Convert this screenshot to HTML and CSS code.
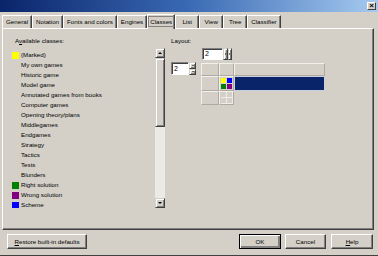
FILE: index.html
```html
<!DOCTYPE html>
<html>
<head>
<meta charset="utf-8">
<link rel="stylesheet" href="styles.css">
</head>
<body>
<div class="window">
  <div class="titlebar"><span class="close">×</span></div>
  <div class="tabs">
    <span class="tab">General</span>
    <span class="tab">Notation</span>
    <span class="tab">Fonts and colors</span>
    <span class="tab">Engines</span>
    <span class="tab active"><span class="focus">Classes</span></span>
    <span class="tab">List</span>
    <span class="tab">View</span>
    <span class="tab">Tree</span>
    <span class="tab">Classifier</span>
  </div>
  <div class="panel">
    <div class="left">
      <div class="label">A<u>v</u>ailable classes:</div>
      <div class="listbox">
        <ul class="items">
          <li><span class="sw sw-yellow"></span>(Marked)</li>
          <li><span class="sw"></span>My own games</li>
          <li><span class="sw"></span>Historic game</li>
          <li><span class="sw"></span>Model game</li>
          <li><span class="sw"></span>Annotated games from books</li>
          <li><span class="sw"></span>Computer games</li>
          <li><span class="sw"></span>Opening theory/plans</li>
          <li><span class="sw"></span>Middlegames</li>
          <li><span class="sw"></span>Endgames</li>
          <li><span class="sw"></span>Strategy</li>
          <li><span class="sw"></span>Tactics</li>
          <li><span class="sw"></span>Tests</li>
          <li><span class="sw"></span>Blunders</li>
          <li><span class="sw sw-green"></span>Right solution</li>
          <li><span class="sw sw-purple"></span>Wrong solution</li>
          <li><span class="sw sw-blue"></span>Scheme</li>
        </ul>
        <div class="scrollbar">
          <div class="sb-btn"><span class="arr-up"></span></div>
          <div class="sb-thumb"></div>
          <div class="sb-track"></div>
          <div class="sb-btn"><span class="arr-down"></span></div>
        </div>
      </div>
    </div>
    <div class="right">
      <div class="label">Layout:</div>
      <div class="spin spin-h">
        <span class="field field-h">2</span>
        <span class="hbtns"><span class="mini"><span class="arr-l"></span></span><span class="mini"><span class="arr-r"></span></span></span>
      </div>
      <div class="layout-row">
        <div class="spin spin-v">
          <span class="field field-v">2</span>
          <span class="vbtns"><span class="mini"><span class="arr-su"></span></span><span class="mini"><span class="arr-sd"></span></span></span>
        </div>
        <div class="grid">
          <div class="cell"></div>
          <div class="cell"></div>
          <div class="cell"></div>
          <div class="cell"></div>
          <div class="cell colors">
            <span class="dot sw-yellow"></span><span class="dot sw-blue"></span>
            <span class="dot sw-green"></span><span class="dot sw-purple"></span>
          </div>
          <div class="cell navy"></div>
          <div class="cell"></div>
          <div class="cell smalls"><span></span><span></span><span></span><span></span></div>
          <div class="blank"></div>
        </div>
      </div>
    </div>
  </div>
  <div class="footer">
    <span class="btn btn-restore"><u>R</u>estore built-in defaults</span>
    <span class="spacer"></span>
    <span class="btn btn-ok">OK</span>
    <span class="btn btn-cancel">Cancel</span>
    <span class="btn btn-help"><u>H</u>elp</span>
  </div>
</div>
</body>
</html>
```
FILE: styles.css
```css
* { box-sizing: border-box; }
body {
  margin: 0;
  background: #d4d0c8;
  font: 6.2px/8px "Liberation Sans", Arial, sans-serif;
  color: #000;
}
u { text-decoration: underline; text-underline-offset: 1px; }
.window {
  width: 378px;
  height: 256px;
  display: flex;
  flex-direction: column;
  overflow: hidden;
  border-bottom: 1px solid #404040;
}
.titlebar {
  height: 12px;
  flex: none;
  background: linear-gradient(to right, #0a246a 0%, #3a6ab4 50%, #a6caf0 100%);
  display: flex;
  justify-content: flex-end;
  padding: 2px 2px 0 0;
}
.close {
  width: 9px;
  height: 8px;
  background: #d4d0c8;
  border: 1px solid;
  border-color: #fff #404040 #404040 #fff;
  font-size: 8px;
  line-height: 6px;
  text-align: center;
  font-weight: bold;
}
.tabs {
  height: 16px;
  flex: none;
  display: flex;
  align-items: flex-end;
  padding-left: 2px;
}
.tab {
  height: 13px;
  line-height: 12px;
  padding: 0 3px;
  min-width: 24px;
  text-align: center;
  border-left: 1px solid #fff;
  border-top: 1px solid #fff;
  border-right: 1px solid #404040;
  box-shadow: inset -1px 0 #808080;
}
.tab.active {
  height: 15px;
  padding: 1px 0 0;
  margin-bottom: -1px;
  background: #d4d0c8;
  position: relative;
  z-index: 1;
}
.focus {
  display: block;
  border: 1px solid #858380;
  line-height: 9px;
  padding: 0 1px;
}
.panel {
  flex: none;
  height: 202px;
  margin: 0 4px 0 2px;
  border-top: 1px solid #fff;
  border-left: 1px solid #fff;
  border-right: 1px solid #404040;
  border-bottom: 1px solid #404040;
  box-shadow: inset -1px -1px #808080;
  display: flex;
  gap: 6px;
  padding: 8px 0 0 7px;
}
.left { width: 155px; display: flex; flex-direction: column; }
.label { height: 8px; line-height: 8px; padding-left: 5px; }
.right .label { padding-left: 0; }
.listbox {
  margin-top: 3px;
  height: 160px;
  display: flex;
}
.items {
  flex: 1;
  list-style: none;
  margin: 0;
  padding: 2px 0 0 2px;
  overflow: hidden;
}
.items li {
  height: 10px;
  line-height: 10px;
  display: flex;
  align-items: center;
  white-space: nowrap;
}
.sw {
  width: 7px;
  height: 7px;
  margin-right: 2px;
  flex: none;
}
.sw-yellow { background: #ffff00; }
.sw-green { background: #008000; }
.sw-purple { background: #800080; }
.sw-blue { background: #0000ff; }
.scrollbar {
  width: 10px;
  display: flex;
  flex-direction: column;
  background: #eceae5;
}
.sb-btn, .sb-thumb, .mini {
  background: #d4d0c8;
  border: 1px solid;
  border-color: #d4d0c8 #404040 #404040 #d4d0c8;
  box-shadow: inset 1px 1px #fff, inset -1px -1px #808080;
}
.sb-btn {
  height: 10px;
  flex: none;
  display: flex;
  align-items: center;
  justify-content: center;
}
.sb-thumb { height: 69px; flex: none; }
.sb-track { flex: 1; }
.arr-up, .arr-down, .arr-su, .arr-sd {
  width: 0; height: 0;
  border-left: 2px solid transparent;
  border-right: 2px solid transparent;
}
.arr-up { border-bottom: 2px solid #000; }
.arr-down { border-top: 2px solid #000; }
.arr-su { border-bottom: 1.5px solid #000; border-left-width: 1.5px; border-right-width: 1.5px; }
.arr-sd { border-top: 1.5px solid #000; border-left-width: 1.5px; border-right-width: 1.5px; }
.arr-l, .arr-r {
  width: 0; height: 0;
  border-top: 1.5px solid transparent;
  border-bottom: 1.5px solid transparent;
}
.arr-l { border-right: 1.5px solid #000; }
.arr-r { border-left: 1.5px solid #000; }
.spin { display: flex; }
.spin-h { margin: 3px 0 0 31px; height: 12px; }
.field {
  background: #fff;
  border: 1px solid;
  border-color: #808080 #fff #fff #808080;
  box-shadow: inset 1px 1px #404040;
  padding-left: 2px;
  font-size: 7px;
}
.field-h { width: 21px; height: 12px; line-height: 10px; }
.hbtns { display: flex; height: 12px; }
.hbtns .mini { width: 4.5px; height: 12px; }
.mini {
  display: flex;
  align-items: center;
  justify-content: center;
}
.layout-row { display: flex; gap: 5px; margin-top: 2px; }
.spin-v { height: 13px; }
.field-v { width: 18px; height: 13px; line-height: 11px; }
.vbtns { display: flex; flex-direction: column; width: 7px; }
.vbtns .mini { height: 6.5px; }
.grid {
  margin-top: 1px;
  display: grid;
  grid-template-columns: 18px 15px 91px;
  grid-template-rows: 13px 15px 14px;
}
.cell {
  border-top: 1px solid #f2f1ec;
  border-left: 1px solid #f2f1ec;
  border-right: 1px solid #aeaaa2;
  border-bottom: 1px solid #aeaaa2;
}
.navy {
  background: #0a246a;
  border-color: #c9d0e2;
}
.colors {
  display: grid;
  grid-template-columns: 5px 5px;
  grid-template-rows: 5px 5px;
  gap: 1px;
  padding: 1px 0 0 1px;
}
.smalls {
  display: grid;
  grid-template-columns: 6px 6px;
  grid-template-rows: 6px 6px;
  padding: 0 0 0 1px;
}
.smalls span {
  border-right: 1px solid #eeede8;
  border-bottom: 1px solid #eeede8;
}
.footer {
  flex: 1;
  display: flex;
  gap: 4px;
  padding: 4px 5px 0 7px;
}
.spacer { flex: 1; }
.btn {
  height: 15px;
  line-height: 13px;
  text-align: center;
  background: #d4d0c8;
  border: 1px solid;
  border-color: #fff #404040 #404040 #fff;
  box-shadow: inset -1px -1px #808080;
}
.btn-restore { width: 80px; }
.btn-ok {
  width: 42px;
  border-color: #000;
  box-shadow: inset 1px 1px #fff, inset -2px -2px #808080;
}
.btn-cancel { width: 41px; margin-left: 0; }
.btn-help { width: 42px; margin-left: 1px; }
```
